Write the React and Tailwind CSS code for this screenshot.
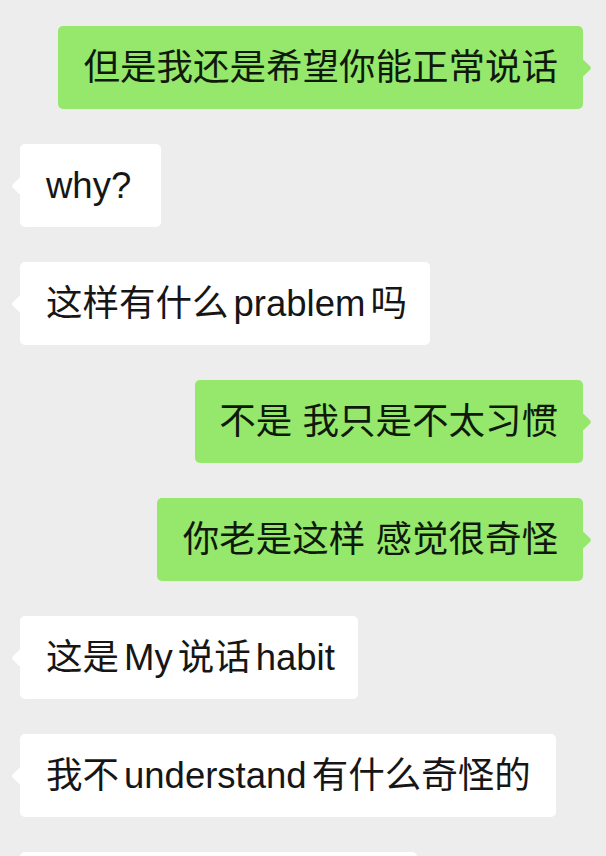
import React from "react";

const messages = [
  { side: "right", parts: ["但是我还是希望你能正常说话"], w: "w-[525px]" },
  { side: "left", parts: [{ en: "why?" }], w: "w-[141px]" },
  { side: "left", parts: ["这样有什么", { en: "prablem" }, "吗"], w: "w-[410px]" },
  { side: "right", parts: ["不是 我只是不太习惯"], w: "w-[388px]" },
  { side: "right", parts: ["你老是这样 感觉很奇怪"], w: "w-[426px]" },
  { side: "left", parts: ["这是", { en: "My" }, "说话", { en: "habit" }], w: "w-[338px]" },
  { side: "left", parts: ["我不", { en: "understand" }, "有什么奇怪的"], w: "w-[536px]" },
  { side: "left", parts: [], w: "w-[397px]" },
];

function Bubble({ side, parts, w }) {
  const right = side === "right";
  return (
    <div className={right ? "flex justify-end pr-[23px]" : "flex justify-start pl-[20px]"}>
      <div
        className={
          "relative h-[83px] shrink-0 rounded-[5px] flex items-center " +
          w +
          (right ? " bg-[#95e86b] justify-end pr-[25px]" : " bg-white pl-[26px]")
        }
      >
        <div
          className={
            "absolute top-1/2 -translate-y-1/2 w-[13px] h-[13px] rotate-45 rounded-[2px] " +
            (right ? "-right-[6px] bg-[#95e86b]" : "-left-[6px] bg-white")
          }
        />
        <span
          className={
            "relative whitespace-nowrap text-[36.5px] leading-[45px] " +
            (right ? "text-[#0f1a0c]" : "text-[#161616]")
          }
          style={{ fontFamily: '"Liberation Sans", "Noto Sans CJK SC", sans-serif' }}
        >
          {parts.map((p, i) =>
            typeof p === "string" ? (
              <span key={i}>{p}</span>
            ) : (
              <span
                key={i}
                className={
                  (i > 0 ? "ml-[5px] " : "") + (i < parts.length - 1 ? "mr-[5px]" : "")
                }
              >
                {p.en}
              </span>
            )
          )}
        </span>
      </div>
    </div>
  );
}

export default function App() {
  return (
    <div className="w-[606px] h-[856px] overflow-hidden bg-[#ededed] pt-[26px] flex flex-col gap-[35px]">
      {messages.map((m, i) => (
        <Bubble key={i} {...m} />
      ))}
    </div>
  );
}
